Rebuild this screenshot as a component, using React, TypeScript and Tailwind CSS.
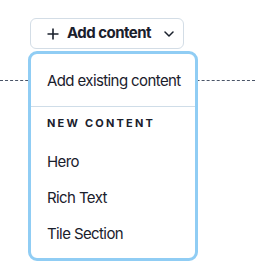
import React from "react";

const items = ["Hero", "Rich Text", "Tile Section"];

const PlusIcon = () => (
  <svg width="12" height="12" viewBox="0 0 12 12" fill="none" stroke="currentColor" strokeWidth="1.6">
    <path d="M6 0.5v11M0.5 6h11" />
  </svg>
);

const ChevronIcon = () => (
  <svg width="10" height="6" viewBox="0 0 10 6" fill="none" stroke="currentColor" strokeWidth="1.5" strokeLinecap="round" strokeLinejoin="round">
    <path d="M1 1l4 4 4-4" />
  </svg>
);

export default function App() {
  return (
    <div className="relative h-[275px] w-[255px] bg-white pt-[18px] text-[#1a202c]" style={{ fontFamily: "Inter, 'Noto Sans', sans-serif" }}>
      {/* trigger */}
      <button className="ml-[30px] flex h-[31px] w-[154px] items-center rounded-md border border-[#d3dde6] bg-white pl-[16px] text-[15px] font-bold tracking-[-0.035em] whitespace-nowrap">
        <PlusIcon />
        <span className="ml-[8px]">Add content</span>
        <span className="ml-[13px]">
          <ChevronIcon />
        </span>
      </button>

      {/* section line */}
      <div className="mt-[31px] border-t border-dashed border-[#4a5568]" />

      {/* menu */}
      <div className="absolute left-[28px] top-[51px] w-[170px] rounded-[9px] border-[3px] border-[#90cdf4] bg-white">
        <div className="pt-[9px] pb-[7px]">
          <div className="flex h-9 items-center px-4 text-[15px] tracking-[-0.04em] whitespace-nowrap">Add existing content</div>
        </div>
        <div className="border-t border-[#cfdde8]" />
        <div className="pt-[8px] pb-[13px] px-4 text-[11px] leading-4 font-bold tracking-[0.2em]">NEW CONTENT</div>
        <div className="pb-[6px]">
          {items.map((item) => (
            <div key={item} className="flex h-9 items-center px-4 text-[15px] tracking-[-0.04em]">
              {item}
            </div>
          ))}
        </div>
      </div>
    </div>
  );
}
